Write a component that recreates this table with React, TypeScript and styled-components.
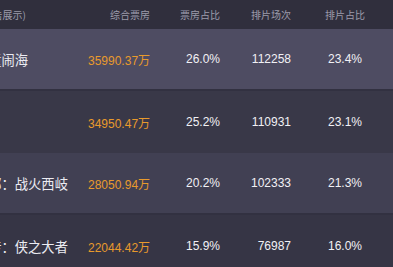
import React from "react";
import styled, { createGlobalStyle } from "styled-components";

const Global = createGlobalStyle`
  html, body { margin: 0; padding: 0; background: #363545; }
  body { width: 393px; height: 267px; overflow: hidden; }
`;

const Viewport = styled.div`
  width: 393px;
  height: 267px;
  overflow: hidden;
  background: #363545;
  font-family: "Liberation Sans", Arial, "Noto Sans CJK SC", sans-serif;
`;

const Table = styled.div`
  margin-left: -65px;
  width: 458px;
  display: flex;
  flex-direction: column;
`;

const cols = "153px 62px 70px 71px 71px 1fr";

const HeaderRow = styled.div`
  display: grid;
  grid-template-columns: ${cols};
  align-items: center;
  height: 29px;
  background: #302f3d;
  color: #9c9bab;
  font-size: 10px;
  font-family: "Noto Sans CJK SC", "Liberation Sans", sans-serif;
`;

const Row = styled.div<{ $bg: string; $line: boolean }>`
  display: grid;
  grid-template-columns: ${cols};
  align-items: center;
  height: 62px;
  box-sizing: border-box;
  background: ${(p) => p.$bg};
  border-bottom: ${(p) => (p.$line ? "2px solid #323141" : "none")};
`;

const NameCell = styled.div`
  color: #ececf2;
  font-size: 13.3px;
  font-family: "Noto Sans CJK SC", sans-serif;
  white-space: nowrap;
  overflow: hidden;
`;

const HeadName = styled.div`
  text-align: right;
  padding-right: 62px;
  white-space: nowrap;
  overflow: hidden;
`;

const Cell = styled.div<{ $gold?: boolean }>`
  text-align: right;
  font-size: 12px;
  color: ${(p) => (p.$gold ? "#e89a2c" : "#f1f1f5")};
  white-space: nowrap;
`;

const HeadCell = styled.div<{ $shift?: number }>`
  text-align: right;
  white-space: nowrap;
  margin-right: ${(p) => p.$shift ?? 0}px;
`;

const Unit = styled.span`
  font-family: "Noto Sans CJK SC", sans-serif;
  font-size: 12px;
`;

const rows = [
  { name: "哪吒之魔童闹海", money: "35990.37", p1: "26.0%", c: "112258", p2: "23.4%", bg: "#4e4c62", line: true },
  { name: "唐探1900", money: "34950.47", p1: "25.2%", c: "110931", p2: "23.1%", bg: "#393848", line: false },
  { name: "封神第二部：战火西岐", money: "28050.94", p1: "20.2%", c: "102333", p2: "21.3%", bg: "#414053", line: true },
  { name: "射雕英雄传：侠之大者", money: "22044.42", p1: "15.9%", c: "76987", p2: "16.0%", bg: "#363545", line: false },
];

export default function App() {
  return (
    <Viewport>
      <Global />
      <Table>
        <HeaderRow>
          <HeadName>影片(点击展示)</HeadName>
          <HeadCell>综合票房</HeadCell>
          <HeadCell>票房占比</HeadCell>
          <HeadCell>排片场次</HeadCell>
          <HeadCell $shift={-3}>排片占比</HeadCell>
          <div />
        </HeaderRow>
        {rows.map((r) => (
          <Row key={r.name} $bg={r.bg} $line={r.line}>
            <NameCell>{r.name}</NameCell>
            <Cell $gold>
              {r.money}
              <Unit>万</Unit>
            </Cell>
            <Cell>{r.p1}</Cell>
            <Cell>{r.c}</Cell>
            <Cell>{r.p2}</Cell>
            <div />
          </Row>
        ))}
      </Table>
    </Viewport>
  );
}
